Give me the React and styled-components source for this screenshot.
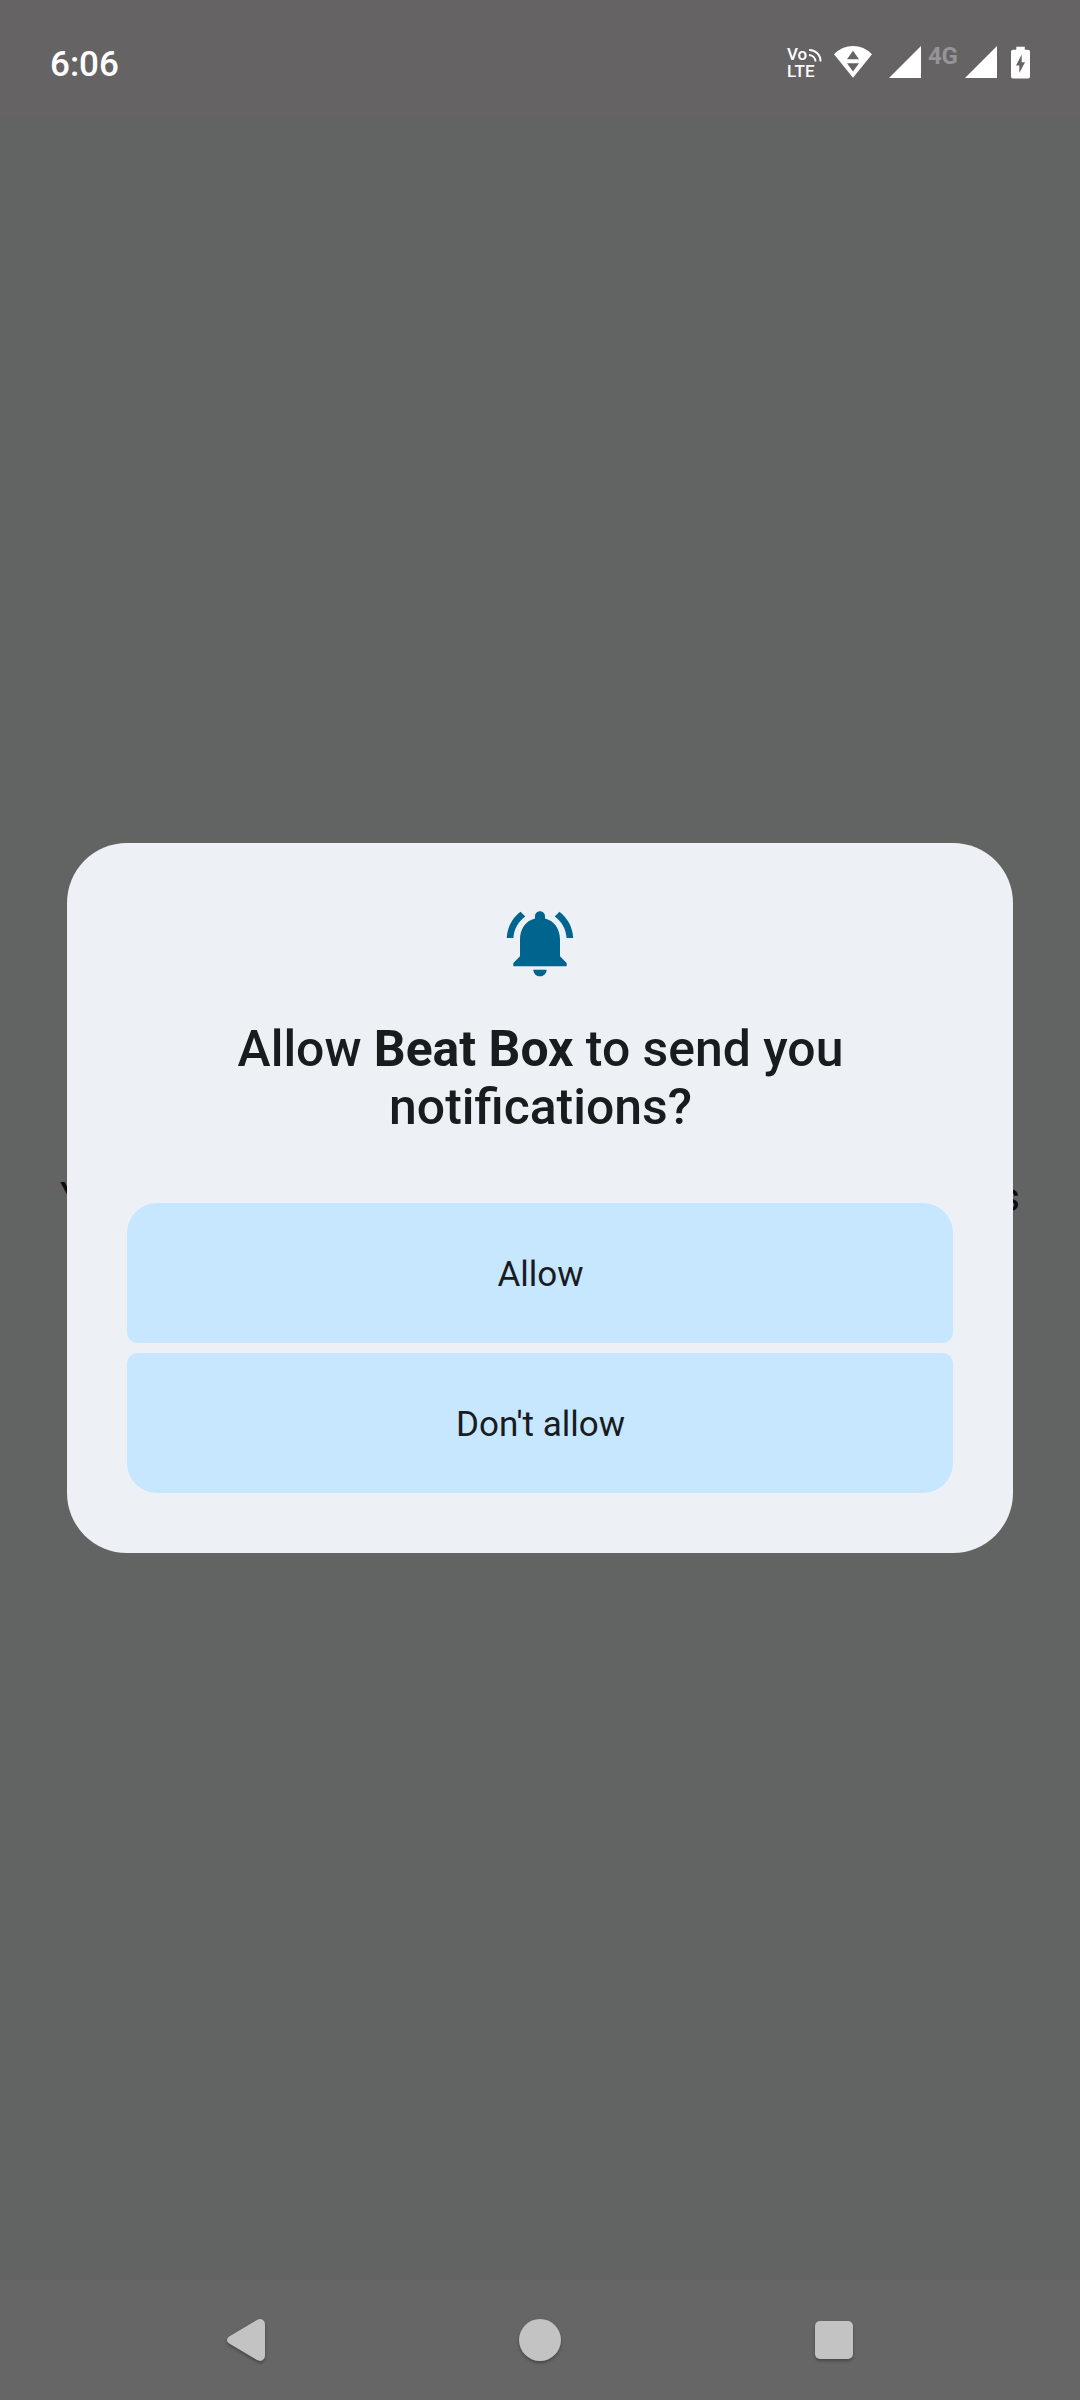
import React from "react";
import styled, { createGlobalStyle } from "styled-components";

const GlobalStyle = createGlobalStyle`
  html, body { margin: 0; padding: 0; background: #626463; }
  * { box-sizing: border-box; }
`;

const Screen = styled.div`
  width: 1080px;
  height: 2400px;
  display: flex;
  flex-direction: column;
  background: #626463;
  font-family: Roboto, "Noto Sans", sans-serif;
  overflow: hidden;
`;

const StatusBar = styled.header`
  height: 117px;
  flex: none;
  display: flex;
  justify-content: space-between;
  padding: 0 50px;
  background: #666364;
  color: #fff;
`;

const Clock = styled.time`
  padding-top: 44px;
  font-size: 35px;
  font-weight: 500;
  line-height: 42px;
`;

const StatusIcons = styled.div`
  display: flex;
  align-items: flex-start;
  padding-top: 45px;
  height: 100%;
`;

const Glyph = styled.svg`
  display: block;
  flex: none;
  overflow: visible;
  margin-left: ${(p) => p.$gap || 0}px;
`;

const VoLte = styled.div`
  display: grid;
  grid-template-rows: 17px 16px;
  margin-top: 1px;
  width: 36px;
  font-size: 17px;
  line-height: 16px;
  font-weight: 500;
`;

const VoRow = styled.div`
  display: grid;
  grid-template-columns: 20px 16px;
`;

const Lte = styled.span`
  letter-spacing: 0.3px;
`;

const Network = styled.span`
  width: 31px;
  margin: 1px 0 0 7px;
  font-size: 24px;
  line-height: 20px;
  font-weight: 700;
  color: #969495;
  letter-spacing: -0.3px;
`;

const Body = styled.main`
  flex: 1;
  display: grid;
  grid-template-columns: 60px 960px 60px;
  grid-template-rows: 726px 710px 1fr;
`;

const PageText = styled.p`
  grid-column: 2;
  grid-row: 2;
  margin: 331px 0 0;
  display: flex;
  justify-content: space-between;
  font-size: 40px;
  line-height: 47px;
  color: #0c0c0c;
`;

const Dialog = styled.section`
  grid-column: 1 / -1;
  grid-row: 2;
  z-index: 1;
  justify-self: center;
  width: 946px;
  height: 710px;
  padding: 60px;
  display: flex;
  flex-direction: column;
  align-items: center;
  border-radius: 60px;
  background: #edf1f6;
  color: #191c1e;
`;

const Title = styled.h1`
  margin: 37px 0 0;
  padding-left: 1px;
  width: 700px;
  font-size: 49.9px;
  line-height: 58px;
  font-weight: 500;
  text-align: center;
`;

const Strong = styled.b`
  font-weight: 700;
`;

const Actions = styled.div`
  width: 100%;
  margin-top: auto;
  display: flex;
  flex-direction: column;
  gap: 10px;
`;

const Action = styled.button`
  height: 140px;
  border: 0;
  padding: 2px 0 0 1px;
  background: #c6e7ff;
  border-radius: ${(p) => (p.$last ? "10px 10px 30px 30px" : "30px 30px 10px 10px")};
  font: 400 35px Roboto, "Noto Sans", sans-serif;
  color: #191c1e;
`;

const NavBar = styled.nav`
  height: 120px;
  flex: none;
  display: grid;
  grid-template-columns: repeat(3, 294px);
  justify-content: center;
  align-items: center;
  justify-items: center;
  background: #666666;
`;

const NavIcon = styled.svg`
  display: block;
  fill: #c3c3c3;
  filter: drop-shadow(0 2px 1.5px rgba(0, 0, 0, 0.3));
`;

const Signal = ({ gap }) => (
  <Glyph $gap={gap} width="32" height="33" viewBox="0 0 32 33">
    <path fill="#fff" d="M32 1v32H0z" />
  </Glyph>
);

export default function App() {
  return (
    <>
      <GlobalStyle />
      <Screen>
        <StatusBar>
          <Clock>6:06</Clock>
          <StatusIcons>
            <VoLte>
              <VoRow>
                <span>Vo</span>
                <svg width="16" height="17" viewBox="0 0 16 17" fill="none" stroke="#fff" strokeWidth="1.9">
                  <path d="M2 4A11 11 0 0 1 13.500 15.500M2 9A7 7 0 0 1 8.500 15.500" />
                </svg>
              </VoRow>
              <Lte>LTE</Lte>
            </VoLte>
            <Glyph $gap={11} width="38" height="33" viewBox="0 0 38 33">
              <path
                fill="#fff"
                fillRule="evenodd"
                d="M0 9.300Q8 1 19 1T38 9.300L19 32.700ZM13 14.200H25L19 5.700ZM13 18.200L19 26.400L25 18.200Z"
              />
            </Glyph>
            <Signal gap={17} />
            <Network>4G</Network>
            <Signal gap={6} />
            <Glyph $gap={14} width="19" height="34" viewBox="0 0 19 34">
              <path
                fill="#fff"
                fillRule="evenodd"
                d="M5.300 1.700h8.500v3H17a2 2 0 0 1 2 2V31.500a2 2 0 0 1-2 2H2a2 2 0 0 1-2-2V6.700a2 2 0 0 1 2-2h3.300zM10.700 9.500L5 20.500h3.300V28L14 17.200h-3.300z"
              />
            </Glyph>
          </StatusIcons>
        </StatusBar>
        <Body>
          <PageText>
            <span>Y</span>
            <span>s</span>
          </PageText>
          <Dialog>
            <svg width="80" height="80" viewBox="0 0 24 24" fill="#00658e">
              <path d="M7.58 4.08L6.15 2.65C3.75 4.48 2.17 7.3 2.03 10.5h2c.15-2.65 1.51-4.97 3.55-6.42zm12.39 6.42h2c-.15-3.2-1.73-6.02-4.12-7.85l-1.42 1.43c2.02 1.45 3.39 3.77 3.54 6.42zM18 11c0-3.07-1.64-5.64-4.5-6.32V4c0-.83-.67-1.5-1.5-1.5s-1.5.67-1.5 1.5v.68C7.63 5.36 6 7.92 6 11v5l-2 2v1h16v-1l-2-2v-5zm-6 11c.14 0 .27-.01.4-.04.65-.14 1.18-.58 1.44-1.18.1-.24.15-.5.15-.78h-4c.01 1.1.9 2 2.01 2z" />
            </svg>
            <Title>
              Allow <Strong>Beat Box</Strong> to send you notifications?
            </Title>
            <Actions>
              <Action>Allow</Action>
              <Action $last>Don't allow</Action>
            </Actions>
          </Dialog>
        </Body>
        <NavBar>
          <NavIcon width="38" height="42" viewBox="0 0 38 42">
            <path d="M2.200 17.500L30 .900Q33 -.600 35.500 .800Q38 2.300 38 5V37Q38 39.700 35.500 41.200Q33 42.600 30 41.100L2.200 24.500Q0 23.200 0 21T2.200 17.500Z" />
          </NavIcon>
          <NavIcon width="42" height="42" viewBox="0 0 42 42">
            <circle cx="21" cy="21" r="21" />
          </NavIcon>
          <NavIcon width="38" height="38" viewBox="0 0 38 38">
            <rect width="38" height="38" rx="5" />
          </NavIcon>
        </NavBar>
      </Screen>
    </>
  );
}
